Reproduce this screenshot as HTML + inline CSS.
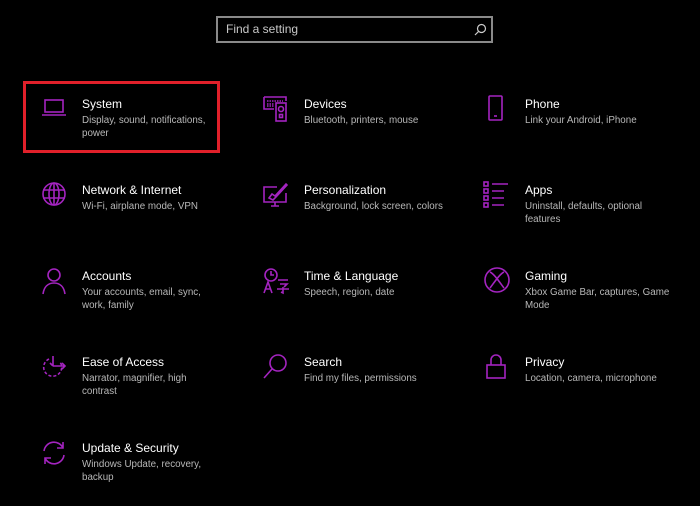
<!DOCTYPE html>
<html><head><style>
body{margin:0;width:700px;height:506px;background:#000;overflow:hidden;font-family:"Liberation Sans",sans-serif;position:relative}
.s{position:absolute;left:216px;top:16px;height:23px;border:2px solid #8a8a8a;color:#c8c8c8;font-size:12px;line-height:23px;padding-left:8px;box-sizing:content-box;width:265px}
.it{position:absolute;width:200px}
.it svg{position:absolute;left:-42px;top:-2px}
.t{color:#fff;font-size:12px;line-height:14px}
.d{color:#b8b8b8;font-size:9.8px;line-height:13px;margin-top:3px;white-space:nowrap}
.red{position:absolute;left:23px;top:81px;width:191px;height:66px;border:3px solid #e0202a}
svg *{fill:none;stroke:#a424c0;stroke-width:1.6}
</style></head><body>
<div class="s">Find a setting<svg style="position:absolute;right:4px;top:5px" width="13" height="13" viewBox="0 0 13 13"><circle cx="7.5" cy="5.5" r="4" style="stroke:#ccc;stroke-width:1.2"/><path d="M4.7 8.3L1 12" style="stroke:#ccc;stroke-width:1.2"/></svg></div>
<div class="red"></div>

<div class="it" style="left:82px;top:97px"><svg width="28" height="28" viewBox="0 0 28 28"><rect x="5" y="5" width="18" height="12"/><path d="M2 20h24"/></svg><div class="t">System</div><div class="d">Display, sound, notifications,<br>power</div></div>
<div class="it" style="left:304px;top:97px"><svg width="28" height="28" viewBox="0 0 28 28"><path d="M2 2h22v4M2 2v12h10"/><rect x="14" y="8" width="10" height="18"/><circle cx="19" cy="14" r="2.5"/><rect x="17.5" y="19.5" width="3" height="3"/><path d="M5 6h16M5 9h7M5 11h7" style="stroke-dasharray:1.5 1"/></svg><div class="t">Devices</div><div class="d">Bluetooth, printers, mouse</div></div>
<div class="it" style="left:525px;top:97px"><svg width="28" height="28" viewBox="0 0 28 28"><rect x="6" y="1" width="13" height="24" rx="1"/><path d="M11 21h3"/></svg><div class="t">Phone</div><div class="d">Link your Android, iPhone</div></div>

<div class="it" style="left:82px;top:183px"><svg width="28" height="28" viewBox="0 0 28 28"><circle cx="14" cy="13" r="11"/><ellipse cx="14" cy="13" rx="5" ry="11"/><path d="M3 9h22M3 17h22M14 2v22"/></svg><div class="t">Network &amp; Internet</div><div class="d">Wi-Fi, airplane mode, VPN</div></div>
<div class="it" style="left:304px;top:183px"><svg width="28" height="28" viewBox="0 0 28 28"><path d="M15 6H2v15h22V12M9 25h8M13 21v4M7 17l3-4 3 2 11-12 1 1-11 12-3 3z"/></svg><div class="t">Personalization</div><div class="d">Background, lock screen, colors</div></div>
<div class="it" style="left:525px;top:183px"><svg width="28" height="28" viewBox="0 0 28 28"><rect x="1" y="1" width="4" height="4"/><rect x="1" y="8" width="4" height="4"/><rect x="1" y="15" width="4" height="4"/><rect x="1" y="22" width="4" height="4"/><path d="M9 3h16M9 10h12M9 17h12M9 24h12"/></svg><div class="t">Apps</div><div class="d">Uninstall, defaults, optional<br>features</div></div>

<div class="it" style="left:82px;top:269px"><svg width="28" height="28" viewBox="0 0 28 28"><circle cx="14" cy="8" r="6"/><path d="M3 27c1-7 5-11 11-11s10 4 11 11"/></svg><div class="t">Accounts</div><div class="d">Your accounts, email, sync,<br>work, family</div></div>
<div class="it" style="left:304px;top:269px"><svg width="28" height="28" viewBox="0 0 28 28"><circle cx="9" cy="8" r="6"/><path d="M9 4v4h3M2 26l4-11 4 11M3.5 22h5M16 13h10M18 17h7l-3 3M21 20v6l-2-1M15 22h12"/></svg><div class="t">Time &amp; Language</div><div class="d">Speech, region, date</div></div>
<div class="it" style="left:525px;top:269px"><svg width="28" height="28" viewBox="0 0 28 28"><circle cx="14" cy="13" r="12"/><path d="M7 5c4 2 8 8 14 16M21 5c-4 2-8 8-14 16"/></svg><div class="t">Gaming</div><div class="d">Xbox Game Bar, captures, Game<br>Mode</div></div>

<div class="it" style="left:82px;top:355px"><svg width="28" height="28" viewBox="0 0 28 28"><path d="M9 6a9 9 0 1 0 11 3" style="stroke-dasharray:3 2"/><path d="M13 3v10M10 10l3 3M13 13h12M22 10l3 3-3 3"/></svg><div class="t">Ease of Access</div><div class="d">Narrator, magnifier, high<br>contrast</div></div>
<div class="it" style="left:304px;top:355px"><svg width="28" height="28" viewBox="0 0 28 28"><circle cx="16" cy="10" r="8"/><path d="M10 16L2 25"/></svg><div class="t">Search</div><div class="d">Find my files, permissions</div></div>
<div class="it" style="left:525px;top:355px"><svg width="28" height="28" viewBox="0 0 28 28"><rect x="4" y="12" width="18" height="13"/><path d="M8 12V7a5 5 0 0 1 10 0v5"/></svg><div class="t">Privacy</div><div class="d">Location, camera, microphone</div></div>

<div class="it" style="left:82px;top:441px"><svg width="28" height="28" viewBox="0 0 28 28"><path d="M4 12a10 10 0 0 1 19-3M24 16a10 10 0 0 1-19 3M23 3v6h-6M5 25v-6h6"/></svg><div class="t">Update &amp; Security</div><div class="d">Windows Update, recovery,<br>backup</div></div>
</body></html>
